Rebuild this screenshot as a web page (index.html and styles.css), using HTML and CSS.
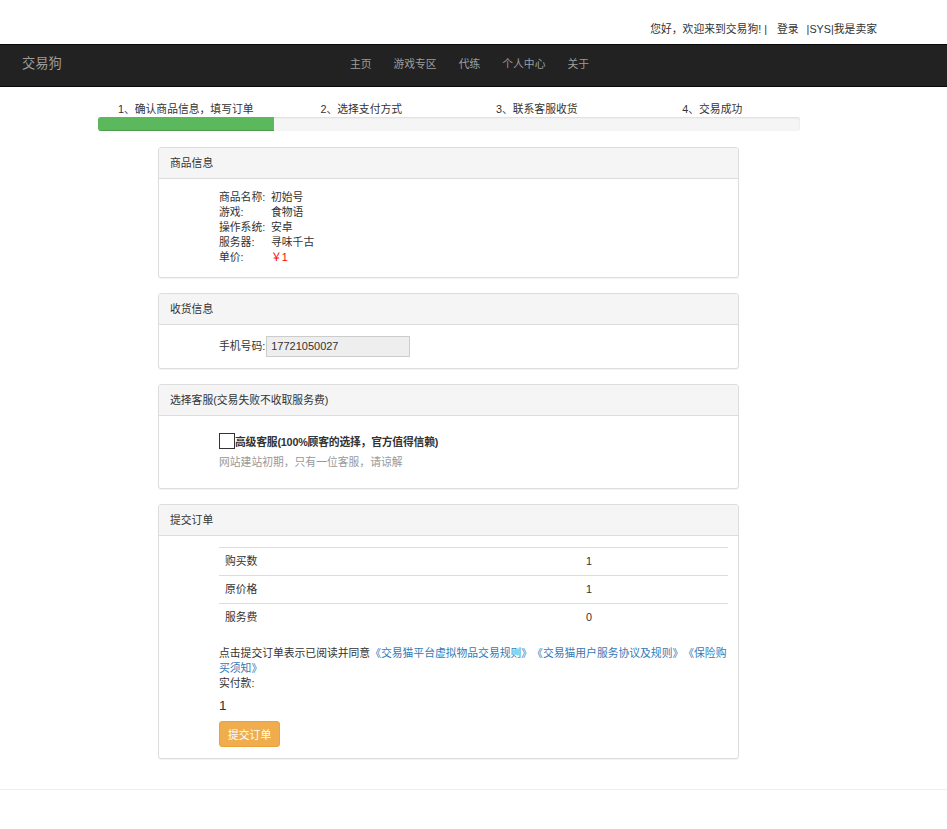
FILE: index.html
```html
<!DOCTYPE html>
<html lang="zh-CN">
<head>
<meta charset="utf-8">
<title>交易狗 - 确认订单</title>
<link rel="stylesheet" href="styles.css">
</head>
<body>
<div class="topbar">
  <span class="welcome">您好，欢迎来到交易狗! |</span>
  <a class="tlink" href="#">登录</a>
  <a class="tlink" href="#">|SYS|我是卖家</a>
</div>
<nav class="navbar">
  <a class="brand" href="#">交易狗</a>
  <ul class="nav">
    <li><a href="#">主页</a></li>
    <li><a href="#">游戏专区</a></li>
    <li><a href="#">代练</a></li>
    <li><a href="#">个人中心</a></li>
    <li><a href="#">关于</a></li>
  </ul>
</nav>
<div class="steps">
  <div class="step-labels">
    <span>1、确认商品信息，填写订单</span>
    <span>2、选择支付方式</span>
    <span>3、联系客服收货</span>
    <span>4、交易成功</span>
  </div>
  <div class="progress"><div class="progress-bar" style="width:25%"></div></div>
</div>
<main class="main">
  <section class="panel">
    <div class="panel-heading">商品信息</div>
    <div class="panel-body">
      <div class="info-grid">
        <span>商品名称:</span><span>初始号</span>
        <span>游戏:</span><span>食物语</span>
        <span>操作系统:</span><span>安卓</span>
        <span>服务器:</span><span>寻味千古</span>
        <span>单价:</span><span class="price">￥1</span>
      </div>
    </div>
  </section>
  <section class="panel">
    <div class="panel-heading">收货信息</div>
    <div class="panel-body body-phone">
      <div class="phone-row"><span>手机号码:</span><span class="input">17721050027</span></div>
    </div>
  </section>
  <section class="panel">
    <div class="panel-heading">选择客服(交易失败不收取服务费)</div>
    <div class="panel-body body-service">
      <div class="check-row"><span class="checkbox"></span><b>高级客服(100%顾客的选择，官方值得信赖)</b></div>
      <div class="muted">网站建站初期，只有一位客服，请谅解</div>
    </div>
  </section>
  <section class="panel">
    <div class="panel-heading">提交订单</div>
    <div class="panel-body body-order">
      <table class="table">
        <tr><td class="c1">购买数</td><td>1</td></tr>
        <tr><td class="c1">原价格</td><td>1</td></tr>
        <tr><td class="c1">服务费</td><td>0</td></tr>
      </table>
      <p class="agree">点击提交订单表示已阅读并同意<a href="#">《交易猫平台虚拟物品交易规则》</a><a href="#">《交易猫用户服务协议及规则》</a><a href="#">《保险购买须知》</a><br>实付款:</p>
      <div class="total">1</div>
      <button class="btn">提交订单</button>
    </div>
  </section>
</main>
<footer class="footer"></footer>
</body>
</html>
```

FILE: styles.css
```css
* { box-sizing: border-box; }
html, body { margin: 0; padding: 0; background: #fff; }
body {
  font-family: "Liberation Sans", "Noto Sans CJK SC", sans-serif;
  font-size: 10.8px;
  line-height: 15px;
  color: #333;
  font-kerning: none;
  text-spacing-trim: space-all;
  font-feature-settings: "kern" 0, "halt" 0, "chws" 0, "palt" 0;
}
a { text-decoration: none; }

.topbar {
  height: 44px;
  padding: 22px 70px 0 0;
  display: flex;
  justify-content: flex-end;
  line-height: 15px;
}
.welcome { color: #333; }
.tlink { color: #333; margin-left: 10px; }
.tlink + .tlink { margin-left: 8px; }

.navbar {
  height: 43px;
  background: #222;
  border-top: 1px solid #080808;
  border-bottom: 1px solid #080808;
  display: flex;
  align-items: center;
  padding-bottom: 4px;
}
.brand {
  color: #9d9d9d;
  font-size: 13.3px;
  margin-left: 22px;
  line-height: 20px;
}
.nav {
  list-style: none;
  margin: 0 0 0 277px;
  padding: 0;
  display: flex;
}
.nav a {
  display: block;
  padding: 0 11px;
  color: #9d9d9d;
  line-height: 20px;
}

.steps {
  width: 702px;
  margin: 15px 0 0 98px;
}
.step-labels {
  display: grid;
  grid-template-columns: repeat(4, 1fr);
  text-align: center;
  line-height: 15px;
}
.progress {
  height: 14px;
  background: #f5f5f5;
  border-radius: 3px;
  overflow: hidden;
  box-shadow: inset 0 1px 2px rgba(0,0,0,.1);
}
.progress-bar {
  height: 100%;
  background: #5cb85c;
  box-shadow: inset 0 -1px 0 rgba(0,0,0,.15);
}

.main {
  width: 581px;
  margin: 16px 0 0 158px;
}
.panel {
  border: 1px solid #ddd;
  border-radius: 3px;
  background: #fff;
  box-shadow: 0 1px 1px rgba(0,0,0,.05);
  margin-bottom: 15px;
}
.panel:last-child { margin-bottom: 0; }
.panel-heading {
  background: #f5f5f5;
  border-bottom: 1px solid #ddd;
  padding: 7px 11px 7px 11px;
  line-height: 16px;
  border-radius: 2px 2px 0 0;
}
.panel-body {
  padding: 11px 10px 12px 60px;
}

.info-grid {
  display: grid;
  grid-template-columns: 52px auto;
}
.price { color: #f00; }

.body-phone { padding-bottom: 11px; }
.phone-row {
  display: flex;
  align-items: center;
  height: 21px;
}
.input {
  display: block;
  width: 144px;
  height: 21px;
  margin-left: 1px;
  padding: 2px 4px;
  background: #eee;
  border: 1px solid #ccc;
  font-size: 11px;
  line-height: 15px;
  color: #333;
}

.body-service { padding-top: 16px; padding-bottom: 18px; }
.check-row {
  display: flex;
  align-items: flex-end;
  height: 18px;
}
.checkbox {
  width: 16px;
  height: 16px;
  border: 1px solid #333;
  margin-bottom: 1px;
}
.check-row b { font-weight: bold; line-height: 15px; letter-spacing: -0.2px; }
.muted { color: #999; margin-top: 5px; }

.body-order { padding-bottom: 11px; }
.table {
  width: 509px;
  border-collapse: collapse;
  border-spacing: 0;
}
.table td {
  border-top: 1px solid #ddd;
  height: 28px;
  padding: 0 6px;
  vertical-align: middle;
}
.table .c1 { width: 361px; }
.agree { margin: 14px 0 0 0; width: 509px; }
.agree a { color: #337ab7; }
.total {
  font-size: 13.5px;
  line-height: 16px;
  margin-top: 7px;
}
.btn {
  display: block;
  margin-top: 7px;
  height: 26px;
  padding: 0 8px;
  background: #f0ad4e;
  border: 1px solid #eea236;
  border-radius: 3px;
  color: #fff;
  font-family: inherit;
  font-size: 10.8px;
}

.footer {
  margin-top: 30px;
  border-top: 1px solid #eee;
  height: 40px;
}
```
